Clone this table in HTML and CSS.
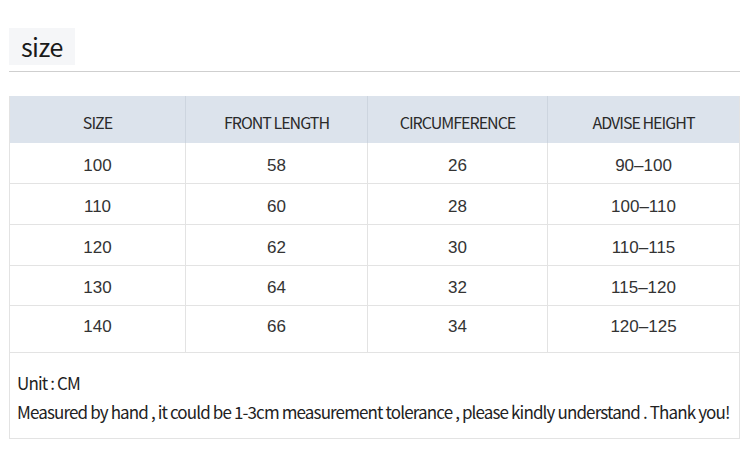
FILE: index.html
```html
<!DOCTYPE html>
<html>
<head>
<meta charset="utf-8">
<link rel="stylesheet" href="styles.css">
</head>
<body>
<div class="page">
  <div class="title-row">
    <div class="title">size</div>
  </div>
  <div class="table">
    <div class="row head">
      <div class="cell">SIZE</div>
      <div class="cell">FRONT LENGTH</div>
      <div class="cell">CIRCUMFERENCE</div>
      <div class="cell">ADVISE HEIGHT</div>
    </div>
    <div class="row">
      <div class="cell">100</div><div class="cell">58</div><div class="cell">26</div><div class="cell">90–100</div>
    </div>
    <div class="row">
      <div class="cell">110</div><div class="cell">60</div><div class="cell">28</div><div class="cell">100–110</div>
    </div>
    <div class="row">
      <div class="cell">120</div><div class="cell">62</div><div class="cell">30</div><div class="cell">110–115</div>
    </div>
    <div class="row short">
      <div class="cell">130</div><div class="cell">64</div><div class="cell">32</div><div class="cell">115–120</div>
    </div>
    <div class="row last">
      <div class="cell">140</div><div class="cell">66</div><div class="cell">34</div><div class="cell">120–125</div>
    </div>
    <div class="notes">
      <p class="unit">Unit : CM</p>
      <p class="msg">Measured by hand , it could be 1-3cm measurement tolerance , please kindly understand . Thank you!</p>
    </div>
  </div>
</div>
</body>
</html>
```

FILE: styles.css
```css
html, body {
  margin: 0;
  padding: 0;
  background: #ffffff;
}
body {
  font-family: "Noto Sans CJK KR", "Noto Sans", sans-serif;
  color: #222;
}
.page {
  width: 731px;
  padding: 28px 0 0 9px;
}
.title-row {
  border-bottom: 1px solid #cfcfcf;
  padding-bottom: 6px;
}
.title {
  display: inline-block;
  width: 66px;
  height: 37px;
  box-sizing: border-box;
  background: #f5f6f8;
  padding-left: 12px;
  font-size: 25px;
  line-height: 36px;
  letter-spacing: -0.6px;
  color: #1a1a1a;
  font-weight: 400;
}
.table {
  margin-top: 24px;
  border-left: 1px solid #e3e3e3;
  border-right: 1px solid #e3e3e3;
}
.row {
  display: grid;
  grid-template-columns: 175px 182px 180px 1fr;
  height: 41px;
  border-bottom: 1px solid #e3e3e3;
  box-sizing: border-box;
}
.cell {
  display: flex;
  align-items: center;
  justify-content: center;
  border-left: 1px solid #e3e3e3;
  font-family: "Liberation Sans", Arial, sans-serif;
  font-size: 17px;
  color: #333;
  padding-top: 6px;
}
.cell:first-child {
  border-left: none;
}
.head {
  background: #dce3ec;
  height: 47px;
  border-bottom: none;
}
.head .cell {
  font-family: "Noto Sans CJK KR", "Noto Sans", sans-serif;
  font-size: 16px;
  font-weight: 400;
  letter-spacing: -1px;
  color: #2a2a2a;
  padding-top: 4px;
  border-left-color: #cdd5df;
}
.row.short {
  height: 40px;
}
.row.short .cell {
  padding-top: 4px;
}
.row.last {
  height: 47px;
}
.row.last .cell {
  align-items: flex-start;
  padding-top: 11px;
}
.notes {
  height: 86px;
  box-sizing: border-box;
  border-bottom: 1px solid #e3e3e3;
  padding: 15px 0 0 7px;
  font-size: 17px;
  font-weight: 400;
  letter-spacing: -0.87px;
  color: #222;
}
.notes p {
  margin: 0;
  line-height: 29px;
}
```
